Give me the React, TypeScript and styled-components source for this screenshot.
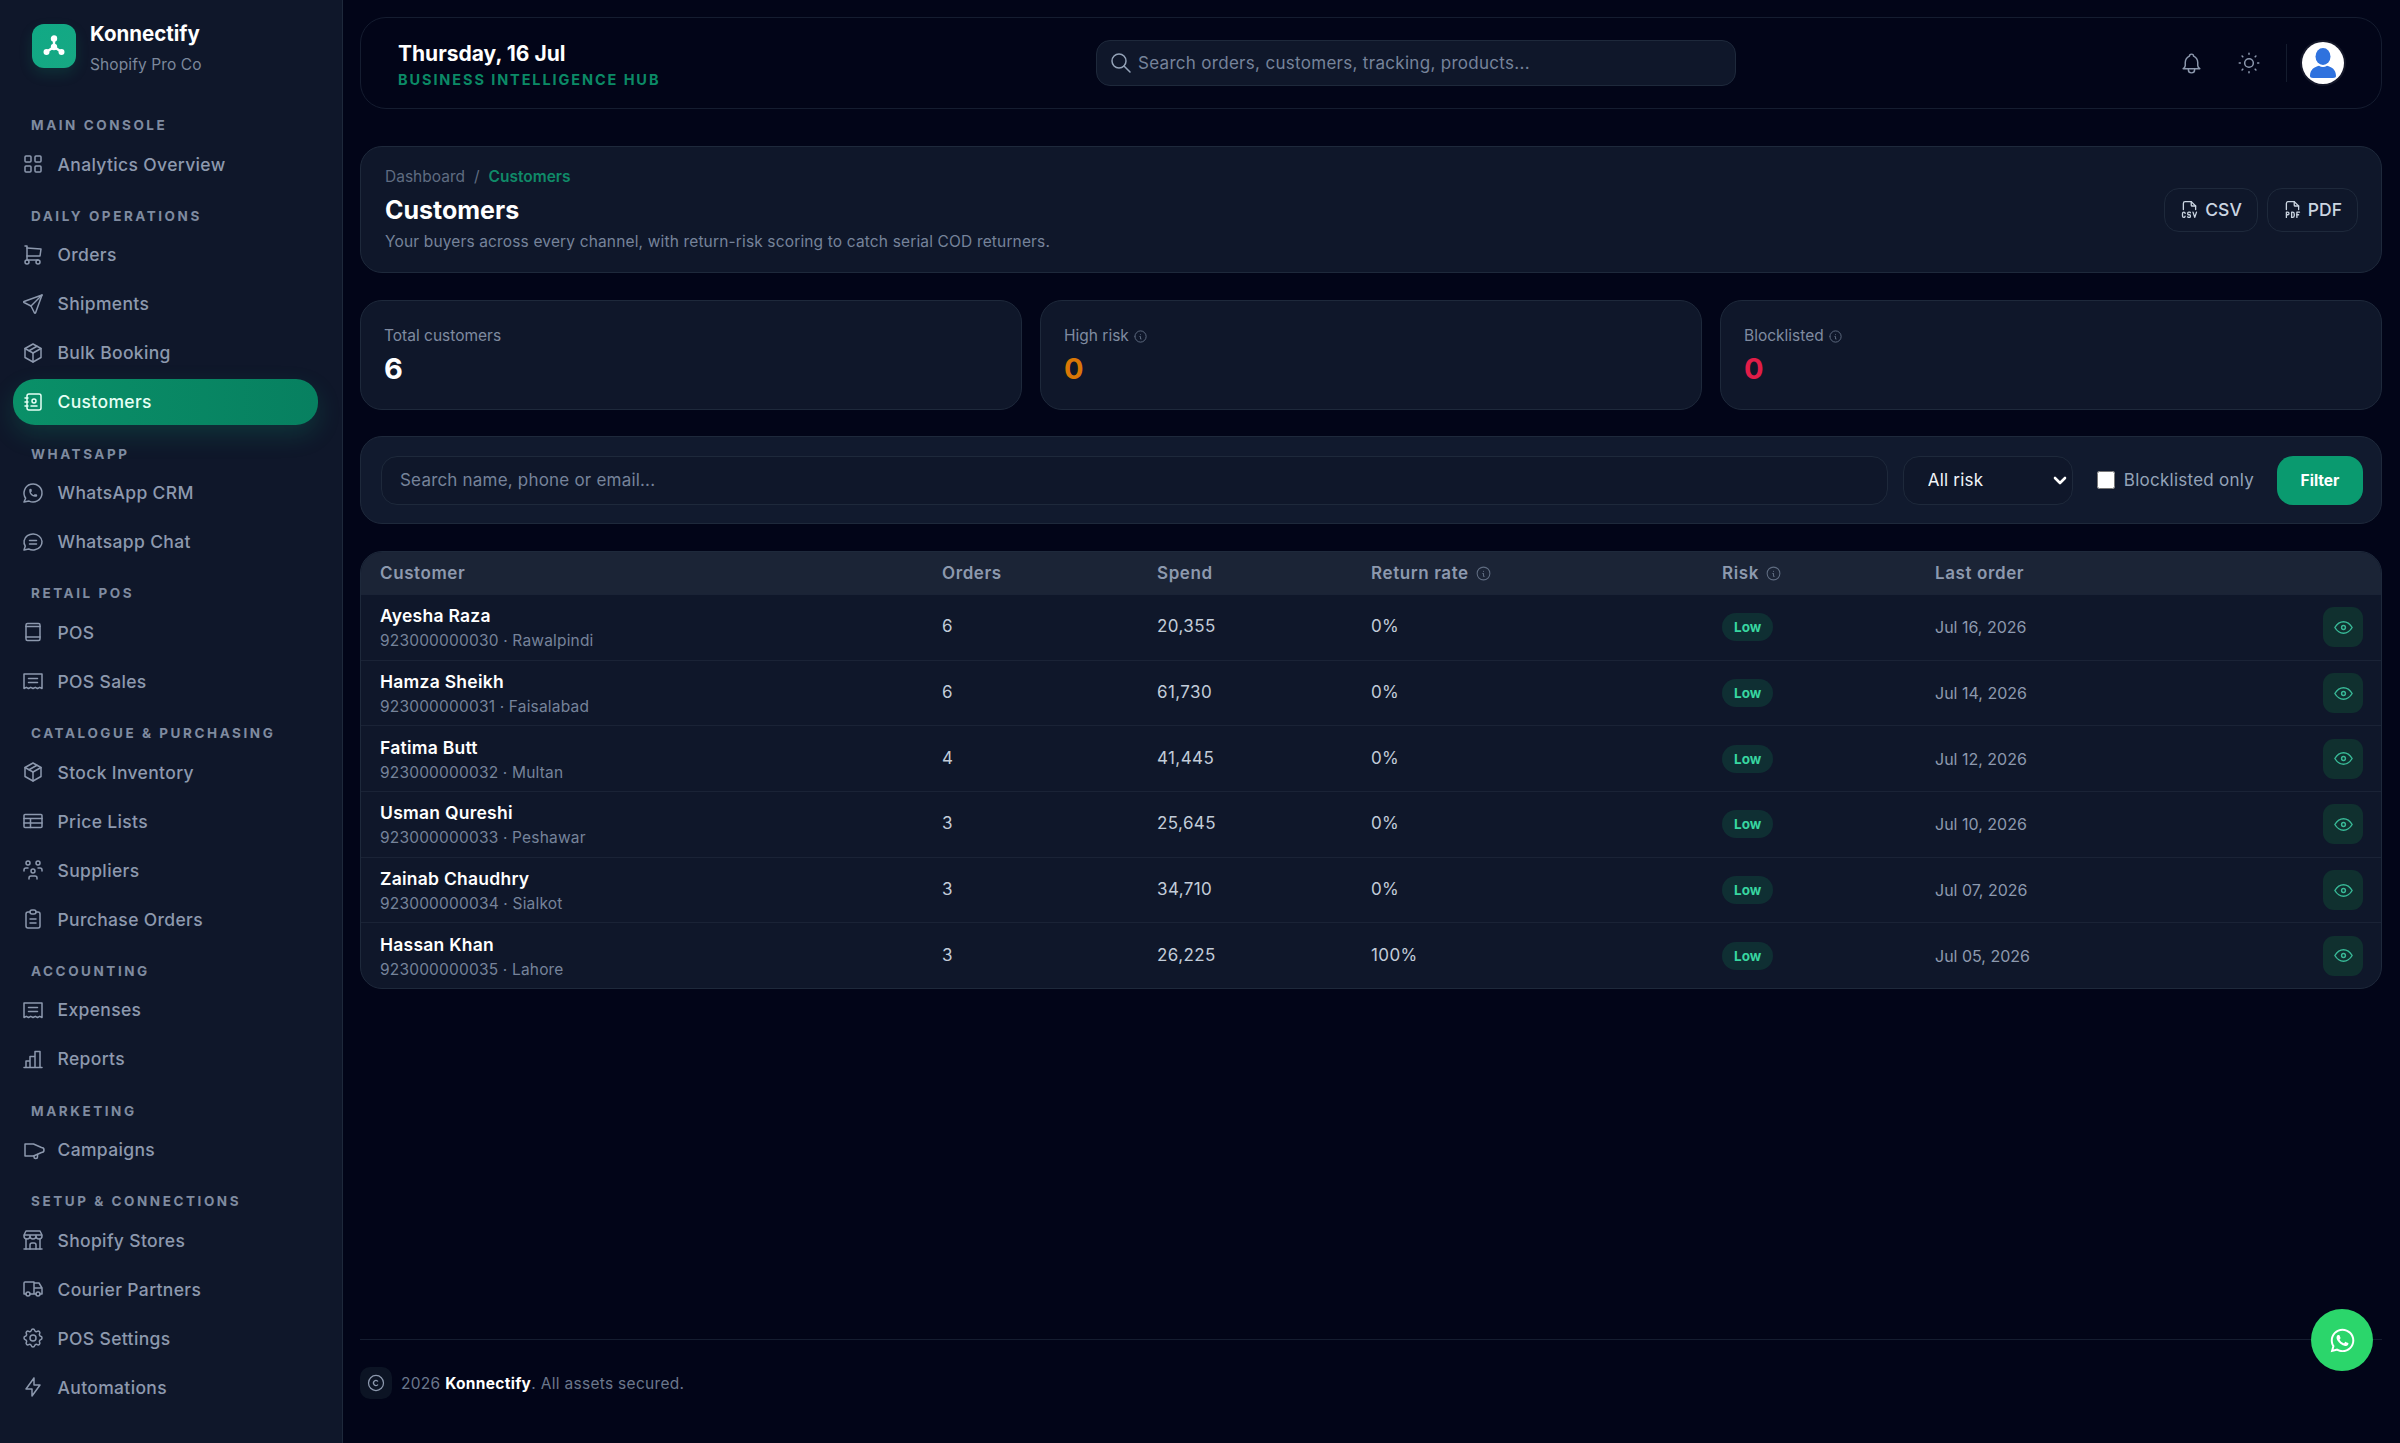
import React from "react";
import styled, { createGlobalStyle } from "styled-components";
import {
  TbLayoutGrid, TbShoppingCart, TbSend, TbPackage, TbAddressBook, TbBrandWhatsapp,
  TbUsersGroup, TbClipboardText, TbBuildingStore, TbTruck,
  TbSettings, TbBolt, TbSearch, TbBell, TbSun, TbFileTypeCsv, TbFileTypePdf, TbInfoCircle, TbEye, TbCopyright,
} from "react-icons/tb";
import { FaWhatsapp } from "react-icons/fa";

const Global = createGlobalStyle`
  html, body { margin: 0; padding: 0; background: #020617; }
  * { box-sizing: border-box; }
  body { font-family: Inter, "Liberation Sans", sans-serif; color: #e2e8f0; }
`;

const Shell = styled.div`
  display: flex;
  width: 2400px;
  height: 1443px;
  overflow: hidden;
  background: #020518;
`;

const Sidebar = styled.aside`
  flex: 0 0 343px;
  background: #0f172a;
  border-right: 1px solid #1e293b;
  padding: 24px 24px 0 13px;
  display: flex;
  flex-direction: column;
`;

const Brand = styled.div`
  display: flex;
  gap: 14px;
  padding-left: 19px;
  height: 55px;
`;

const LogoTile = styled.div`
  width: 44px;
  height: 44px;
  border-radius: 12px;
  background: linear-gradient(135deg, #10a985, #17a883);
  box-shadow: 0 6px 14px rgba(16, 185, 129, 0.15);
  display: flex;
  align-items: center;
  justify-content: center;
`;

const BrandText = styled.div`
  display: flex;
  flex-direction: column;
`;

const BrandName = styled.div`
  font-size: 20.5px;
  line-height: 20px;
  font-weight: 700;
  color: #fff;
`;

const BrandSub = styled.div`
  margin-top: 12px;
  font-size: 15.5px;
  line-height: 18px;
  letter-spacing: 0.1px;
  color: #7c889c;
`;

const SectionLabel = styled.div<{ $first?: boolean }>`
  height: ${(p) => (p.$first ? "33px" : "44.75px")};
  margin-top: ${(p) => (p.$first ? "29px" : "0")};
  padding: 0 0 8px 18px;
  display: flex;
  align-items: flex-end;
  font-size: 13.5px;
  line-height: 16px;
  font-weight: 700;
  letter-spacing: 2.55px;
  color: #7f8ba0;
  white-space: nowrap;
`;

const NavList = styled.div`
  display: flex;
  flex-direction: column;
  gap: 3px;
`;

const NavItem = styled.div<{ $active?: boolean }>`
  height: 46px;
  display: flex;
  align-items: center;
  gap: 12.5px;
  padding-left: 8px;
  border-radius: 22px;
  font-size: 17.5px;
  font-weight: 500;
  letter-spacing: 0.35px;
  color: ${(p) => (p.$active ? "#e6fff5" : "#8d99ae")};
  background: ${(p) => (p.$active ? "linear-gradient(90deg, #0a9068, #078060)" : "transparent")};
  box-shadow: ${(p) => (p.$active ? "0 10px 24px rgba(16, 185, 129, 0.18)" : "none")};
  svg { flex: 0 0 24px; }
`;

const Main = styled.main`
  flex: 1;
  min-width: 0;
  padding: 17px 18px 44px 17px;
  display: flex;
  flex-direction: column;
`;

const TopBar = styled.header`
  height: 92px;
  flex: none;
  display: flex;
  align-items: center;
  border: 1px solid #151d30;
  border-radius: 26px;
  background: #020518;
  padding: 0 37px 0 37px;
`;

const DateBlock = styled.div`
  flex: 0 0 698px;
  padding-top: 3px;
`;

const DateText = styled.div`
  font-size: 21px;
  line-height: 25px;
  font-weight: 700;
  color: #fff;
`;

const HubText = styled.div`
  margin-top: 5px;
  font-size: 14.5px;
  line-height: 18px;
  font-weight: 700;
  letter-spacing: 1.9px;
  color: #0b8a66;
`;

const SearchBox = styled.div`
  width: 640px;
  height: 46px;
  display: flex;
  align-items: center;
  gap: 5px;
  padding-left: 12px;
  border: 1px solid #1e293b;
  border-radius: 14px;
  background: #0f172a;
  color: #94a3b8;
`;

const SearchPlaceholder = styled.span`
  font-size: 17px;
  letter-spacing: 0.3px;
  color: #76839a;
`;

const TopActions = styled.div`
  margin-left: auto;
  display: flex;
  align-items: center;
  color: #8d99ae;
`;

const IconSlot = styled.div`
  width: 58px;
  display: flex;
  justify-content: center;
`;

const Divider = styled.div`
  width: 1px;
  height: 38px;
  background: #141c2e;
  margin: 0 15px 0 8px;
`;

const Avatar = styled.div`
  width: 42px;
  height: 42px;
  border-radius: 50%;
  background: #fff;
  box-shadow: 0 0 0 2px rgba(255, 255, 255, 0.08);
  overflow: hidden;
`;

const PageHead = styled.section`
  margin-top: 37px;
  height: 127px;
  flex: none;
  display: flex;
  align-items: center;
  justify-content: space-between;
  padding: 0 23px 0 24px;
  border: 1px solid #1e293b;
  border-radius: 22px;
  background: #0f172a;
`;

const Crumbs = styled.div`
  display: flex;
  gap: 9px;
  font-size: 15.5px;
  line-height: 20px;
  color: #5f6c81;
`;

const CrumbActive = styled.span`
  color: #0f8a68;
  font-weight: 600;
`;

const Title = styled.h1`
  margin: 8px 0 0;
  font-size: 25px;
  line-height: 30px;
  font-weight: 700;
  color: #fff;
`;

const Desc = styled.p`
  margin: 7px 0 0;
  font-size: 15.5px;
  line-height: 20px;
  letter-spacing: 0.15px;
  color: #76839a;
`;

const HeadButtons = styled.div`
  display: flex;
  gap: 9px;
`;

const GhostButton = styled.div`
  height: 44px;
  display: flex;
  align-items: center;
  gap: 5px;
  padding: 0 15px 0 14px;
  border: 1px solid #1e293b;
  border-radius: 15px;
  font-size: 17.5px;
  font-weight: 500;
  color: #cbd5e1;
`;

const Stats = styled.section`
  margin-top: 27px;
  display: grid;
  grid-template-columns: repeat(3, 1fr);
  gap: 18px;
  flex: none;
`;

const StatCard = styled.div`
  height: 110px;
  padding: 25px 23px 0;
  border: 1px solid #1e293b;
  border-radius: 22px;
  background: #0f172a;
`;

const StatLabel = styled.div`
  display: flex;
  align-items: center;
  gap: 4px;
  font-size: 15.5px;
  line-height: 20px;
  color: #7f8ba0;
  svg { color: #5f6c81; }
`;

const StatValue = styled.div<{ $color: string }>`
  margin-top: 6px;
  font-size: 29px;
  line-height: 34px;
  font-weight: 700;
  color: ${(p) => p.$color};
`;

const FilterBar = styled.section`
  margin-top: 26px;
  height: 88px;
  flex: none;
  display: flex;
  align-items: center;
  padding: 0 18px 0 20px;
  border: 1px solid #1e293b;
  border-radius: 22px;
  background: #111a2e;
`;

const SearchInput = styled.input`
  flex: 1;
  min-width: 0;
  height: 49px;
  padding: 0 18px;
  border: 1px solid #1e293b;
  border-radius: 16px;
  background: #0f172a;
  font: 400 17px Inter, sans-serif;
  letter-spacing: 0.2px;
  color: #e2e8f0;
  outline: none;
  &::placeholder { color: #76839a; opacity: 1; }
`;

const RiskSelect = styled.select`
  flex: none;
  margin-left: 15px;
  width: 170px;
  height: 49px;
  padding: 0 24px 0 24px;
  border: 1px solid #1e293b;
  border-radius: 16px;
  appearance: none;
  background-color: #0f172a;
  background-image: url("data:image/svg+xml,%3Csvg xmlns='http://www.w3.org/2000/svg' width='14' height='9' viewBox='0 0 14 9' fill='none' stroke='white' stroke-width='2.600' stroke-linecap='round' stroke-linejoin='round'%3E%3Cpath d='M2 2l5 5 5-5'/%3E%3C/svg%3E");
  background-repeat: no-repeat;
  background-position: right 5px center;
  font: 400 17px Inter, sans-serif;
  letter-spacing: 0.2px;
  color: #f1f5f9;
  outline: none;
`;

const CheckLabel = styled.label`
  flex: none;
  margin-left: 24px;
  display: flex;
  align-items: center;
  gap: 9px;
  font-size: 17px;
  letter-spacing: 0.25px;
  color: #94a3b8;
  white-space: nowrap;
`;

const Check = styled.input`
  width: 18px;
  height: 18px;
  margin: 0;
`;

const FilterButton = styled.button`
  flex: none;
  margin-left: 23px;
  width: 86px;
  height: 49px;
  border: 0;
  border-radius: 16px;
  background: #0a9a6f;
  font: 700 15.5px Inter, sans-serif;
  color: #fff;
`;

const Table = styled.section`
  margin-top: 27px;
  flex: none;
  border: 1px solid #1e293b;
  border-radius: 22px;
  background: #0f172a;
  overflow: hidden;
`;

const columns = "562px 215px 214px 351px 213px 1fr 40px";

const HeadRow = styled.div`
  display: grid;
  grid-template-columns: ${columns};
  align-items: center;
  height: 42px;
  padding: 0 18px 0 19px;
  background: #1b2436;
  font-size: 17px;
  font-weight: 600;
  letter-spacing: 0.6px;
  color: #8d99ae;
`;

const HeadCell = styled.div`
  display: flex;
  align-items: center;
  gap: 6px;
  svg { color: #5f6c81; }
`;

const Row = styled.div`
  display: grid;
  grid-template-columns: ${columns};
  align-items: center;
  height: 65.7px;
  padding: 0 18px 0 19px;
  border-top: 1px solid #1a2336;
  &:first-of-type { border-top-color: transparent; }
`;

const CustomerCell = styled.div`
  padding-top: 2px;
`;

const Name = styled.div`
  font-size: 17.5px;
  line-height: 22px;
  font-weight: 600;
  letter-spacing: 0.25px;
  color: #fff;
`;

const Sub = styled.div`
  margin-top: 4px;
  font-size: 15.5px;
  line-height: 20px;
  letter-spacing: 0.18px;
  color: #76839a;
`;

const NumberCell = styled.div`
  font-size: 17px;
  letter-spacing: 0.4px;
  color: #c2ccd9;
  margin-bottom: 2px;
`;

const Badge = styled.span`
  display: inline-flex;
  align-items: center;
  height: 28px;
  padding: 0 12px;
  border-radius: 14px;
  background: #0f2f33;
  font-size: 13.5px;
  font-weight: 700;
  color: #38d6a0;
`;

const DateCell = styled.div`
  font-size: 16px;
  color: #8d99ae;
`;

const EyeButton = styled.div`
  width: 40px;
  height: 40px;
  border-radius: 11px;
  background: #10302f;
  color: #38b896;
  display: flex;
  align-items: center;
  justify-content: center;
`;

const Footer = styled.footer`
  margin-top: auto;
  padding-top: 27px;
  border-top: 1px solid #151d30;
  display: flex;
  align-items: center;
  gap: 9px;
  font-size: 15.5px;
  letter-spacing: 0.3px;
  color: #6b778c;
  flex: none;
`;

const FooterIcon = styled.div`
  width: 32px;
  height: 32px;
  border-radius: 10px;
  background: #0c1424;
  color: #8d99ae;
  display: flex;
  align-items: center;
  justify-content: center;
`;

const FooterBrand = styled.strong`
  color: #fff;
  font-weight: 700;
`;

const Fab = styled.div`
  position: fixed;
  left: 2311px;
  top: 1309px;
  width: 62px;
  height: 62px;
  border-radius: 50%;
  background: #2bd66b;
  color: #fff;
  display: flex;
  align-items: center;
  justify-content: center;
`;

const stroke = {
  width: 24, height: 24, viewBox: "0 0 24 24", fill: "none", stroke: "currentColor",
  strokeWidth: 1.5, strokeLinecap: "round" as const, strokeLinejoin: "round" as const,
};

const ReceiptIcon = () => (
  <svg {...stroke}>
    <path d="M3 5h18v14.500l-2.250-1.200-2.250 1.200-2.250-1.200-2.250 1.200-2.250-1.200-2.250 1.200-2.250-1.200L3 19.500z" />
    <path d="M7.500 9.500h9M7.500 13.500h9" />
  </svg>
);

const ChatIcon = () => (
  <svg {...stroke}>
    <path d="M3 20l1.300-3.900C1.976 12.663 2.874 8.228 6.400 5.726c3.526-2.501 8.590-2.296 11.845.48 3.255 2.777 3.695 7.266 1.029 10.501C16.608 19.942 11.659 20.922 7.700 19L3 20" />
    <path d="M8.500 10.500h7M8.500 14h7" />
  </svg>
);

const TabletIcon = () => (
  <svg {...stroke}>
    <rect x="5" y="3.500" width="14" height="17" rx="1.500" />
    <path d="M5 17h14M5 6.500h14" />
  </svg>
);

const PriceTableIcon = () => (
  <svg {...stroke}>
    <rect x="3" y="5.500" width="18" height="13" rx="1" />
    <path d="M3 9.500h18M3 14h18M9.500 9.500v9" />
  </svg>
);

const ReportsIcon = () => (
  <svg {...stroke}>
    <path d="M3 20.500h18M5 20.500v-6.500h4v6.500M9 20.500V9.500h5v11M14 20.500V4.500h5v16" />
  </svg>
);

const CampaignIcon = () => (
  <svg {...stroke}>
    <path d="M4 6h8.500l8 3.500a2.500 2.500 0 0 1 0 5l-8 3.500H4z" />
    <path d="M13 18v1a1.500 1.500 0 0 0 1.500 1.500h.500a1.500 1.500 0 0 0 1.500-1.500v-2.500" />
  </svg>
);

const LogoMark = () => (
  <svg width="28" height="28" viewBox="0 0 28 28" fill="#fff" stroke="#fff" strokeWidth="2.4" strokeLinecap="round">
    <path d="M14 7v8M14 15l-7 4.600M14 15l7 4.600" />
    <circle cx="14" cy="6.500" r="2" />
    <circle cx="6.500" cy="20" r="1.800" />
    <circle cx="21.500" cy="20" r="1.800" />
    <circle cx="14" cy="15" r="2" />
  </svg>
);

const AvatarGlyph = () => (
  <svg width="42" height="42" viewBox="0 0 42 42" fill="#2f72de">
    <ellipse cx="21" cy="14.500" rx="7.500" ry="8.500" />
    <path d="M8 34c0-6.500 4.500-9 9-10.200 2.500 1.600 5.500 1.600 8 0C29.500 25 34 27.500 34 34c0 1-1 2-3 2H11c-2 0-3-1-3-2z" />
  </svg>
);

const navIcon = { size: 24, strokeWidth: 1.5 };

type NavEntry = { label: string; icon: React.ReactNode; active?: boolean };
type NavGroup = { title: string; items: NavEntry[] };

const navGroups: NavGroup[] = [
  { title: "MAIN CONSOLE", items: [{ label: "Analytics Overview", icon: <TbLayoutGrid {...navIcon} /> }] },
  {
    title: "DAILY OPERATIONS",
    items: [
      { label: "Orders", icon: <TbShoppingCart {...navIcon} /> },
      { label: "Shipments", icon: <TbSend {...navIcon} /> },
      { label: "Bulk Booking", icon: <TbPackage {...navIcon} /> },
      { label: "Customers", icon: <TbAddressBook {...navIcon} />, active: true },
    ],
  },
  {
    title: "WHATSAPP",
    items: [
      { label: "WhatsApp CRM", icon: <TbBrandWhatsapp {...navIcon} /> },
      { label: "Whatsapp Chat", icon: <ChatIcon /> },
    ],
  },
  {
    title: "RETAIL POS",
    items: [
      { label: "POS", icon: <TabletIcon /> },
      { label: "POS Sales", icon: <ReceiptIcon /> },
    ],
  },
  {
    title: "CATALOGUE & PURCHASING",
    items: [
      { label: "Stock Inventory", icon: <TbPackage {...navIcon} /> },
      { label: "Price Lists", icon: <PriceTableIcon /> },
      { label: "Suppliers", icon: <TbUsersGroup {...navIcon} /> },
      { label: "Purchase Orders", icon: <TbClipboardText {...navIcon} /> },
    ],
  },
  {
    title: "ACCOUNTING",
    items: [
      { label: "Expenses", icon: <ReceiptIcon /> },
      { label: "Reports", icon: <ReportsIcon /> },
    ],
  },
  { title: "MARKETING", items: [{ label: "Campaigns", icon: <CampaignIcon /> }] },
  {
    title: "SETUP & CONNECTIONS",
    items: [
      { label: "Shopify Stores", icon: <TbBuildingStore {...navIcon} /> },
      { label: "Courier Partners", icon: <TbTruck {...navIcon} /> },
      { label: "POS Settings", icon: <TbSettings {...navIcon} /> },
      { label: "Automations", icon: <TbBolt {...navIcon} /> },
    ],
  },
];

const customers = [
  { name: "Ayesha Raza", sub: "923000000030 · Rawalpindi", orders: 6, spend: "20,355", rate: "0%", date: "Jul 16, 2026" },
  { name: "Hamza Sheikh", sub: "923000000031 · Faisalabad", orders: 6, spend: "61,730", rate: "0%", date: "Jul 14, 2026" },
  { name: "Fatima Butt", sub: "923000000032 · Multan", orders: 4, spend: "41,445", rate: "0%", date: "Jul 12, 2026" },
  { name: "Usman Qureshi", sub: "923000000033 · Peshawar", orders: 3, spend: "25,645", rate: "0%", date: "Jul 10, 2026" },
  { name: "Zainab Chaudhry", sub: "923000000034 · Sialkot", orders: 3, spend: "34,710", rate: "0%", date: "Jul 07, 2026" },
  { name: "Hassan Khan", sub: "923000000035 · Lahore", orders: 3, spend: "26,225", rate: "100%", date: "Jul 05, 2026" },
];

export default function App() {
  return (
    <Shell>
      <Global />
      <Sidebar>
        <Brand>
          <LogoTile><LogoMark /></LogoTile>
          <BrandText>
            <BrandName>Konnectify</BrandName>
            <BrandSub>Shopify Pro Co</BrandSub>
          </BrandText>
        </Brand>
        {navGroups.map((group, i) => (
          <div key={group.title}>
            <SectionLabel $first={i === 0}>{group.title}</SectionLabel>
            <NavList>
              {group.items.map((item) => (
                <NavItem key={item.label} $active={item.active}>
                  {item.icon}
                  {item.label}
                </NavItem>
              ))}
            </NavList>
          </div>
        ))}
      </Sidebar>
      <Main>
        <TopBar>
          <DateBlock>
            <DateText>Thursday, 16 Jul</DateText>
            <HubText>BUSINESS INTELLIGENCE HUB</HubText>
          </DateBlock>
          <SearchBox>
            <TbSearch size={24} strokeWidth={1.5} />
            <SearchPlaceholder>Search orders, customers, tracking, products...</SearchPlaceholder>
          </SearchBox>
          <TopActions>
            <IconSlot><TbBell size={25} strokeWidth={1.4} /></IconSlot>
            <IconSlot><TbSun size={26} strokeWidth={1.4} /></IconSlot>
            <Divider />
            <Avatar><AvatarGlyph /></Avatar>
          </TopActions>
        </TopBar>

        <PageHead>
          <div>
            <Crumbs>
              <span>Dashboard</span>
              <span>/</span>
              <CrumbActive>Customers</CrumbActive>
            </Crumbs>
            <Title>Customers</Title>
            <Desc>Your buyers across every channel, with return-risk scoring to catch serial COD returners.</Desc>
          </div>
          <HeadButtons>
            <GhostButton><TbFileTypeCsv size={21} strokeWidth={1.5} />CSV</GhostButton>
            <GhostButton><TbFileTypePdf size={21} strokeWidth={1.5} />PDF</GhostButton>
          </HeadButtons>
        </PageHead>

        <Stats>
          <StatCard>
            <StatLabel>Total customers</StatLabel>
            <StatValue $color="#ffffff">6</StatValue>
          </StatCard>
          <StatCard>
            <StatLabel>High risk <TbInfoCircle size={15} strokeWidth={1.5} /></StatLabel>
            <StatValue $color="#d97706">0</StatValue>
          </StatCard>
          <StatCard>
            <StatLabel>Blocklisted <TbInfoCircle size={15} strokeWidth={1.5} /></StatLabel>
            <StatValue $color="#e11d48">0</StatValue>
          </StatCard>
        </Stats>

        <FilterBar>
          <SearchInput placeholder="Search name, phone or email..." />
          <RiskSelect defaultValue="all">
            <option value="all">All risk</option>
          </RiskSelect>
          <CheckLabel><Check type="checkbox" />Blocklisted only</CheckLabel>
          <FilterButton>Filter</FilterButton>
        </FilterBar>

        <Table>
          <HeadRow>
            <HeadCell>Customer</HeadCell>
            <HeadCell>Orders</HeadCell>
            <HeadCell>Spend</HeadCell>
            <HeadCell>Return rate <TbInfoCircle size={17} strokeWidth={1.5} /></HeadCell>
            <HeadCell>Risk <TbInfoCircle size={17} strokeWidth={1.5} /></HeadCell>
            <HeadCell>Last order</HeadCell>
            <div />
          </HeadRow>
          {customers.map((c) => (
            <Row key={c.name}>
              <CustomerCell>
                <Name>{c.name}</Name>
                <Sub>{c.sub}</Sub>
              </CustomerCell>
              <NumberCell>{c.orders}</NumberCell>
              <NumberCell>{c.spend}</NumberCell>
              <NumberCell>{c.rate}</NumberCell>
              <div><Badge>Low</Badge></div>
              <DateCell>{c.date}</DateCell>
              <EyeButton><TbEye size={23} strokeWidth={1.5} /></EyeButton>
            </Row>
          ))}
        </Table>

        <Footer>
          <FooterIcon><TbCopyright size={20} strokeWidth={1.5} /></FooterIcon>
          <span>2026 <FooterBrand>Konnectify</FooterBrand>. All assets secured.</span>
        </Footer>
      </Main>
      <Fab><FaWhatsapp size={27} /></Fab>
    </Shell>
  );
}
